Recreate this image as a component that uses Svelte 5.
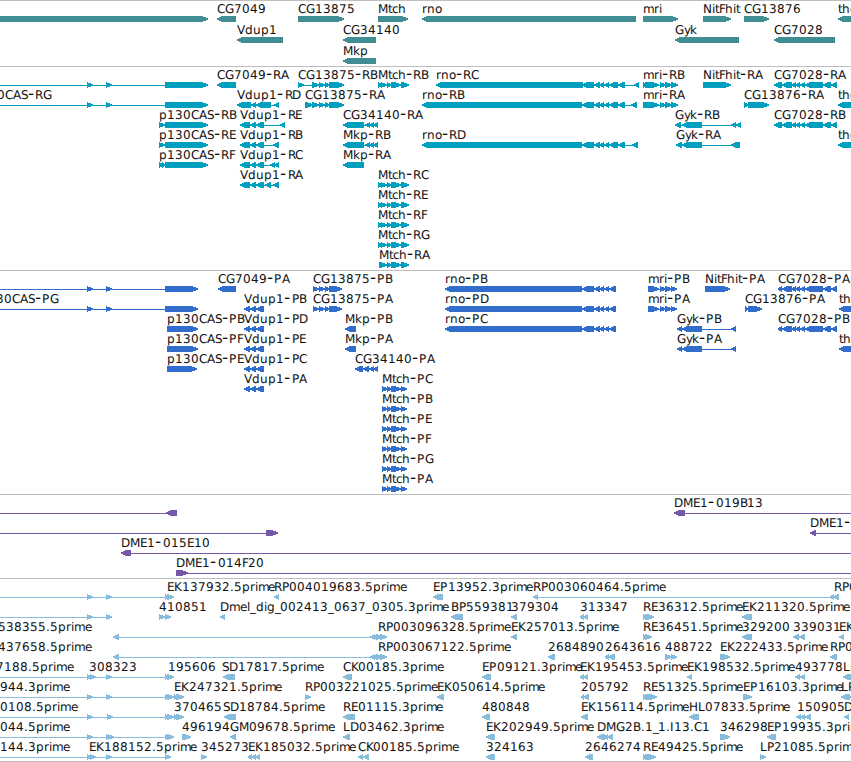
<script lang="ts">
  type Block = [number, number];
  type Feature = {
    row: number;
    name?: string;
    x?: number;
    dir: 'left' | 'right';
    blocks: Block[];
    // x positions the connecting line should reach beyond the blocks
    from?: number;
    to?: number;
  };
  type Track = { id: string; height: number; pitch: number; features: Feature[] };

  const WIDTH = 851;
  const HEAD = 5;

  // label advances, in px
  const advances: Record<string, number> = {
    A: 8, B: 7.5, C: 7.5, D: 9, E: 7, F: 6.5, G: 9, H: 9, I: 4, K: 7.5, L: 6.5, M: 10, N: 8.5,
    P: 7.5, R: 7.5, S: 7, V: 8, c: 6, d: 8, e: 7, g: 8, h: 7.5, i: 3, k: 6.5, l: 3, m: 10.8,
    n: 7.5, o: 7, p: 8, r: 5, t: 4, u: 8, y: 6, '-': 7.5, '.': 4, _: 5.7
  };

  function glyphs(name: string, x: number) {
    const out: number[] = [];
    for (const c of name) {
      out.push(Math.round(x));
      x += advances[c] ?? 8;
    }
    return out.join(' ');
  }

  function shape([a, b]: Block, dir: string) {
    const head = Math.min(HEAD, b - a);
    return dir === 'left'
      ? `M${b} 15V21H${a + head}L${a} 18.8V17.2L${a + head} 15Z`
      : `M${a} 15V21H${b - head}L${b + 0.6} 18.8V17.2L${b - head} 15Z`;
  }

  const L = (row: number, name: string, x: number, blocks: Block[], extra = {}): Feature =>
    ({ row, name, x, dir: 'left', blocks, ...extra });
  const R = (row: number, name: string, x: number, blocks: Block[], extra = {}): Feature =>
    ({ row, name, x, dir: 'right', blocks, ...extra });

  const rnoTail: Block[] = [[582, 594], [594, 600], [600, 604], [604, 609], [609, 618], [618, 625]];
  const rnoCds: Block[] = [[445, 582], [582, 594], [594, 600], [600, 604], [604, 609], [609, 616]];
  const cg13875: Block[] = [[312, 318], [319, 324], [325, 329], [329, 343]];
  const cg13875Cds: Block[] = [[313, 318], [319, 324], [325, 329], [329, 341]];
  const cg7028: Block[] = [[782, 792], [792, 796], [796, 800], [800, 805], [805, 823], [823, 831], [831, 837]];
  const mtch: Block[] = [[378, 382], [381, 386], [387, 391], [391, 400], [401, 408]];
  const mtchCds: Block[] = [[382, 387], [387, 391], [391, 400], [401, 406]];
  const mriTail: Block[] = [[660, 665], [665, 671], [671, 677]];
  const mriCds: Block[] = [[648, 658], [660, 665], [665, 671], [671, 676]];
  const vdup: Block[] = [[240, 250], [250, 256], [256, 264]];
  const vdupCds: Block[] = [[244, 250], [250, 256], [256, 264]];
  const mkp: Block[] = [[343, 364], [365, 370], [370, 374], [374, 378]];
  const exons: Block[] = [[87, 92], [106, 111]];
  const est: Block[] = [...exons, [165, 168], [167, 173]];
  const off = { from: -10 };
  const on = { to: 860 };

  const tracks: Track[] = [
    {
      id: 'gene', height: 66, pitch: 21,
      features: [
        R(0, '', 0, [[-10, 207]]),
        L(0, 'CG7049', 217, [[217, 236]]),
        R(0, 'CG13875', 298, [[298, 343]]),
        R(0, 'Mtch', 378, [[378, 407]]),
        L(0, 'rno', 422, [[422, 636]]),
        R(0, 'mri', 643, [[643, 677]]),
        R(0, 'NitFhit', 703, [[703, 730]]),
        R(0, 'CG13876', 744, [[744, 768]]),
        L(0, 'tho', 838, [[838, 860]]),
        L(1, 'Vdup1', 237, [[237, 283]]),
        L(1, 'CG34140', 343, [[343, 376]]),
        L(1, 'Gyk', 675, [[675, 739]]),
        L(1, 'CG7028', 774, [[774, 835]]),
        L(2, 'Mkp', 343, [[343, 376]])
      ]
    },
    {
      id: 'transcript', height: 204, pitch: 20,
      features: [
        R(0, '', 0, [...exons, [165, 207]], off),
        L(0, 'CG7049-RA', 217, [[217, 236]]),
        R(0, 'CG13875-RB', 298, [[298, 303], ...cg13875]),
        R(0, 'Mtch-RB', 378, mtch),
        L(0, 'rno-RC', 436, [[436, 583], ...rnoTail, [634, 639]]),
        R(0, 'mri-RB', 643, [[643, 645], [645, 658], ...mriTail]),
        R(0, 'NitFhit-RA', 703, [[703, 730]]),
        L(0, 'CG7028-RA', 774, [[774, 782], ...cg7028]),
        R(1, 'p130CAS-RG', -27, [...exons, [165, 207]], off),
        L(1, 'Vdup1-RD', 237, [[237, 251], [251, 256], [256, 271], [274, 279]]),
        R(1, 'CG13875-RA', 305, [[305, 312], ...cg13875]),
        L(1, 'rno-RB', 422, [[422, 582], ...rnoTail, [631, 637]]),
        R(1, 'mri-RA', 643, [[643, 658], ...mriTail]),
        R(1, 'CG13876-RA', 744, [[744, 748], [748, 768]]),
        L(1, 'tho', 838, [[838, 860]]),
        R(2, 'p130CAS-RB', 159, [[159, 164], [165, 207]]),
        L(2, 'Vdup1-RE', 240, [...vdup, [280, 285]]),
        L(2, 'CG34140-RA', 343, mkp),
        L(2, 'Gyk-RB', 675, [[675, 681], [682, 702], [731, 736], [736, 741]]),
        L(2, 'CG7028-RB', 774, [[774, 782], ...cg7028]),
        R(3, 'p130CAS-RE', 159, [[159, 164], [165, 207]]),
        L(3, 'Vdup1-RB', 240, [...vdup, [273, 279]]),
        L(3, 'Mkp-RB', 343, mkp),
        L(3, 'rno-RD', 422, [[422, 582], ...rnoTail, [632, 638]]),
        L(3, 'Gyk-RA', 676, [[676, 682], [682, 702], [731, 740]]),
        L(3, 'tho', 838, [[838, 860]]),
        R(4, 'p130CAS-RF', 159, [[159, 163], [162, 165], [165, 207]]),
        L(4, 'Vdup1-RC', 240, [...vdup, [270, 275], [274, 279]]),
        L(4, 'Mkp-RA', 343, [[343, 364]]),
        L(5, 'Vdup1-RA', 240, [...vdup, [265, 271], [273, 279]]),
        R(5, 'Mtch-RC', 378, mtch),
        R(6, 'Mtch-RE', 378, mtch),
        R(7, 'Mtch-RF', 378, mtch),
        R(8, 'Mtch-RG', 378, mtch),
        R(9, 'Mtch-RA', 379, [[379, 386], [387, 391], [391, 400], [401, 408]])
      ]
    },
    {
      id: 'protein', height: 224, pitch: 20,
      features: [
        R(0, '', 0, [...exons, [165, 197]], off),
        L(0, 'CG7049-PA', 218, [[218, 236]]),
        R(0, 'CG13875-PB', 313, cg13875Cds),
        L(0, 'rno-PB', 445, rnoCds),
        R(0, 'mri-PB', 648, mriCds),
        R(0, 'NitFhit-PA', 705, [[705, 729]]),
        L(0, 'CG7028-PA', 778, [[778, 782], ...cg7028]),
        R(1, 'p130CAS-PG', -20, [...exons, [165, 197]], off),
        L(1, 'Vdup1-PB', 244, vdupCds),
        R(1, 'CG13875-PA', 313, cg13875Cds),
        L(1, 'rno-PD', 445, rnoCds),
        R(1, 'mri-PA', 648, mriCds),
        R(1, 'CG13876-PA', 745, [[745, 748], [748, 761]]),
        L(1, 'th', 839, [[839, 860]]),
        R(2, 'p130CAS-PB', 167, [[167, 197]]),
        L(2, 'Vdup1-PD', 244, vdupCds),
        L(2, 'Mkp-PB', 345, [[345, 356]]),
        L(2, 'rno-PC', 445, rnoCds),
        L(2, 'Gyk-PB', 677, [[677, 682], [682, 702], [731, 736]]),
        L(2, 'CG7028-PB', 778, [[778, 782], ...cg7028]),
        R(3, 'p130CAS-PF', 167, [[167, 197]]),
        L(3, 'Vdup1-PE', 244, vdupCds),
        L(3, 'Mkp-PA', 345, [[345, 356]]),
        L(3, 'Gyk-PA', 677, [[677, 682], [682, 702], [731, 736]]),
        L(3, 'th', 839, [[839, 860]]),
        R(4, 'p130CAS-PE', 167, [[167, 196]]),
        L(4, 'Vdup1-PC', 244, vdupCds),
        L(4, 'CG34140-PA', 355, [[355, 363], [363, 369], [369, 374], [374, 378]]),
        L(5, 'Vdup1-PA', 244, vdupCds),
        R(5, 'Mtch-PC', 382, mtchCds),
        R(6, 'Mtch-PB', 382, mtchCds),
        R(7, 'Mtch-PE', 382, mtchCds),
        R(8, 'Mtch-PF', 382, mtchCds),
        R(9, 'Mtch-PG', 382, mtchCds),
        R(10, 'Mtch-PA', 382, mtchCds)
      ]
    },
    {
      id: 'bac', height: 84, pitch: 20,
      features: [
        L(0, '', 0, [[166, 177]], off),
        L(0, 'DME1-019B13', 674, [[674, 685]], on),
        R(1, '', 0, [[266, 277]], off),
        L(1, 'DME1-', 810, [[810, 816]], on),
        L(2, 'DME1-015E10', 121, [[121, 131]], on),
        R(3, 'DME1-014F20', 176, [[176, 187]], on)
      ]
    },
    {
      id: 'est', height: 183, pitch: 20,
      features: [
        R(0, 'EK137932.5prime', 167, est, off),
        L(0, 'RP004019683.5prime', 274, [[274, 279]]),
        L(0, 'EP13952.3prime', 433, [[433, 443]]),
        L(0, 'RP003060464.5prime', 533, [[533, 538], [830, 834], [833, 839]]),
        L(0, 'RP0', 834, []),
        R(1, '', 0, exons, off),
        R(1, '410851', 159, [[159, 164], [165, 170]]),
        L(1, 'Dmel_dig_002413_0637_0305.3prime', 220, [[220, 225]]),
        L(1, 'BP559381', 451, [[451, 463]]),
        L(1, '379304', 511, [[511, 517]]),
        L(1, '313347', 580, [[580, 584], [583, 588]]),
        R(1, 'RE36312.5prime', 643, [[643, 647], [645, 653]]),
        L(1, 'EK211320.5prime', 742, [[742, 752]]),
        L(2, '538355.5prime', -2, [[113, 119], [370, 375], [373, 378]]),
        R(2, 'RP003096328.5prime', 378, [[376, 382], [380, 386]]),
        L(2, 'EK257013.5prime', 511, [[511, 517]]),
        R(2, 'RE36451.5prime', 643, [[643, 646], [645, 651]]),
        L(2, '329200', 742, [[742, 752]]),
        L(2, '339031', 793, [[793, 799], [799, 805]]),
        L(2, 'EK', 839, [[839, 844]]),
        L(3, '437658.5prime', -2, [[113, 119], [370, 375], [373, 378]]),
        R(3, 'RP003067122.5prime', 378, [[376, 382], [380, 386]]),
        L(3, '2684890', 548, [[548, 555]]),
        L(3, '2643616', 605, [[605, 609], [608, 615]]),
        R(3, '488722', 665, [[665, 671], [671, 676]]),
        R(3, 'EK222433.5prime', 720, [[720, 729]]),
        L(3, 'RP0', 830, [[830, 837]]),
        R(4, '7188.5prime', -4, [[87, 91], [90, 95], [106, 111], [165, 168], [167, 173]], off),
        R(4, '308323', 89, []),
        R(4, '195606', 168, []),
        L(4, 'SD17817.5prime', 222, [[223, 235]]),
        L(4, 'CK00185.3prime', 343, [[343, 352]]),
        L(4, 'EP09121.3prime', 482, [[482, 491]]),
        L(4, 'EK195453.5prime', 580, [[580, 584], [583, 588]]),
        L(4, 'EK198532.5prime', 687, [[687, 692]]),
        L(4, '493778', 795, [[795, 800], [800, 805]]),
        L(4, 'LD', 843, [[843, 860]]),
        R(5, '944.3prime', 0, est, off),
        R(5, 'EK247321.5prime', 174, [[174, 177], [176, 183]]),
        R(5, 'RP003221025.5prime', 305, [[305, 310]]),
        L(5, 'EK050614.5prime', 437, [[437, 444]]),
        L(5, '205792', 581, [[581, 584], [583, 589]]),
        R(5, 'RE51325.5prime', 643, [[643, 647], [645, 656]]),
        R(5, 'EP16103.3prime', 743, [[743, 751]]),
        L(5, 'LP', 841, [[841, 850], [850, 860]]),
        R(6, '0108.5prime', 0, [[87, 92], [107, 112], [165, 168], [167, 173]], off),
        R(6, '370465', 174, [[174, 177], [176, 183]]),
        L(6, 'SD18784.5prime', 223, [[224, 236]]),
        L(6, 'RE01115.3prime', 343, [[343, 355]]),
        L(6, '480848', 482, [[482, 490]]),
        L(6, 'EK156114.5prime', 581, [[581, 588]]),
        L(6, 'HL07833.5prime', 689, [[689, 699]]),
        L(6, '150905', 797, [[796, 801], [800, 805], [805, 811]]),
        L(6, 'D', 844, [[844, 849]]),
        R(7, '044.5prime', 0, [[87, 92], [106, 110], [108, 113], [165, 168], [167, 173]], off),
        R(7, '496194', 182, [[182, 190]]),
        L(7, 'GM09678.5prime', 230, [[230, 236]]),
        L(7, 'LD03462.3prime', 343, [[343, 350]]),
        L(7, 'EK202949.5prime', 486, [[486, 495]]),
        L(7, 'DMG2B.1_1.I13.C1', 597, [[597, 605], [604, 608], [607, 613]]),
        R(7, '346298', 720, [[720, 729]]),
        L(7, 'EP19935.3prime', 767, [[767, 776]]),
        R(8, '144.3prime', 0, [[87, 91], [90, 95], [106, 111], [165, 170]], off),
        R(8, 'EK188152.5prime', 89, []),
        R(8, '345273', 201, [[201, 206]]),
        L(8, 'EK185032.5prime', 248, [[248, 252], [251, 256], [255, 260]]),
        L(8, 'CK00185.5prime', 358, [[358, 363], [363, 369]]),
        L(8, '324163', 486, [[486, 495]]),
        L(8, '2646274', 585, [[585, 593]]),
        R(8, 'RE49425.5prime', 643, [[643, 647], [645, 655]]),
        R(8, 'LP21085.5prime', 760, [[760, 765]])
      ]
    }
  ];
</script>

<main class="browser">
  {#each tracks as track (track.id)}
    <section class="track {track.id}">
      <svg width={WIDTH} height={track.height - 1} viewBox="0 0 {WIDTH} {track.height - 1}">
        {#each track.features as f}
          <g transform="translate(0 {f.row * track.pitch})">
            {#if f.blocks.length}
              {@const start = f.from ?? f.blocks[0][0]}
              {@const end = f.to ?? f.blocks[f.blocks.length - 1][1]}
              <rect class="intron" x={start} y="18" width={end - start} height="1" />
              <path class="exon" d={f.blocks.map((b) => shape(b, f.dir)).join('')} />
            {/if}
            {#if f.name}
              <text x={glyphs(f.name, f.x ?? 0)} y="12">{#each f.name.split(/(-)/) as part}<tspan class:dash={part === '-'}>{part}</tspan>{/each}</text>
            {/if}
          </g>
        {/each}
      </svg>
    </section>
  {/each}
</main>

<style>
  :global(body) {
    background: #fff;
  }

  .browser {
    display: flex;
    flex-direction: column;
    width: 851px;
    height: 762px;
    overflow: hidden;
    background: #fff;
    border-bottom: 1px solid #bebebe;
    box-sizing: border-box;
  }

  .track {
    flex: none;
    border-top: 1px solid #bebebe;
  }

  svg {
    display: block;
  }

  text {
    font-family: "DejaVu Sans", sans-serif;
    font-size: 12px;
    fill: #111;
    text-rendering: geometricPrecision;
  }

  .dash {
    font-size: 17px;
  }

  .intron,
  .exon {
    fill: var(--color);
    shape-rendering: crispEdges;
  }

  .gene {
    --color: #408e93;
  }

  .transcript {
    --color: #009fc0;
  }

  .protein {
    --color: #316dcc;
  }

  .bac {
    --color: #7558a8;
  }

  .est {
    --color: #88bcdd;
  }
</style>
